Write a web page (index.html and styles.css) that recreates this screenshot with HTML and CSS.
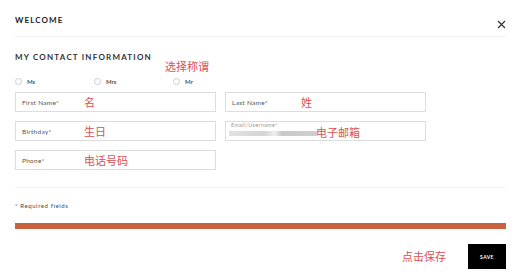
FILE: index.html
```html
<!DOCTYPE html>
<html lang="en">
<head>
    <meta charset="UTF-8">
    <meta name="viewport" content="width=device-width, initial-scale=1.0">
    <title>Welcome</title>
    <link rel="stylesheet" href="styles.css">
</head>
<body>
    <div class="modal">
        <div class="modal-header">
            <div class="modal-title">WELCOME</div>
            <button class="close-btn" aria-label="Close">
                <svg width="9" height="9" viewBox="0 0 9 9"><path d="M1 1L8 8M8 1L1 8" stroke="#333" stroke-width="1.2"/></svg>
            </button>
        </div>

        <div class="section-title">MY CONTACT INFORMATION</div>

        <div class="radio-row">
            <label class="radio"><span class="dot"></span>Ms</label>
            <label class="radio"><span class="dot"></span>Mrs</label>
            <label class="radio"><span class="dot"></span>Mr</label>
            <span class="note note-title">选择称谓</span>
        </div>

        <div class="fields">
            <div class="field">
                <span class="field-label">First Name*</span>
                <span class="note">名</span>
            </div>
            <div class="field">
                <span class="field-label wide">Last Name*</span>
                <span class="note">姓</span>
            </div>
            <div class="field">
                <span class="field-label">Birthday*</span>
                <span class="note">生日</span>
            </div>
            <div class="field field-email">
                <div class="email-col">
                    <span class="email-label">Email/Username*</span>
                    <span class="blur-value"></span>
                </div>
                <span class="note">电子邮箱</span>
            </div>
            <div class="field">
                <span class="field-label">Phone*</span>
                <span class="note">电话号码</span>
            </div>
        </div>

        <div class="divider"></div>

        <div class="required">* Required fields</div>

        <div class="progress-bar"></div>

        <div class="actions">
            <span class="note note-save">点击保存</span>
            <button class="save-btn">SAVE</button>
        </div>
    </div>
</body>
</html>
```

FILE: styles.css
```css
body {
    margin: 0;
    background: #fff;
    font-family: Lato, "Liberation Sans", sans-serif;
    color: #222;
}
.modal {
    width: 491px;
    padding: 0 21px 0 15px;
}
.modal-header {
    display: flex;
    justify-content: space-between;
    align-items: center;
    height: 37px;
    padding-top: 4px;
    box-sizing: border-box;
    border-bottom: 1px solid #f0f0f0;
}
.modal-title {
    font-size: 8px;
    font-weight: bold;
    letter-spacing: 1.1px;
    color: #222;
}
.close-btn {
    border: none;
    background: none;
    padding: 0;
    width: 9px;
    height: 9px;
    margin-top: 2px;
}
.section-title {
    margin-top: 15px;
    font-size: 8px;
    font-weight: bold;
    letter-spacing: 1.2px;
    color: #333;
}
.radio-row {
    position: relative;
    display: flex;
    align-items: center;
    margin-top: 13px;
    height: 12px;
}
.radio {
    display: flex;
    align-items: center;
    gap: 5px;
    width: 79px;
    font-size: 6px;
    font-weight: bold;
    color: #555;
}
.dot {
    width: 5px;
    height: 5px;
    border: 1px solid #ccc;
    border-radius: 50%;
}
.note {
    color: #db5055;
    font-family: "Noto Sans CJK SC", sans-serif;
    font-size: 11px;
    line-height: 1;
}
.note-title {
    position: absolute;
    left: 150px;
    top: -14px;
}
.fields {
    display: grid;
    grid-template-columns: 201px 201px;
    column-gap: 9px;
    row-gap: 9px;
    margin-top: 5px;
}
.field {
    display: flex;
    align-items: center;
    height: 20px;
    box-sizing: border-box;
    border: 1px solid #ddd;
    padding-left: 6px;
}
.field-label {
    width: 62px;
    font-size: 6.5px;
    color: #555;
    letter-spacing: 0.3px;
}
.field-label.wide {
    width: 69px;
}
.field-email {
    align-items: flex-end;
    padding-left: 3px;
    padding-bottom: 2px;
}
.email-col {
    display: flex;
    flex-direction: column;
    gap: 3px;
    width: 87px;
    align-self: stretch;
    padding-top: 0;
}
.email-label {
    font-size: 5.5px;
    color: #999;
    letter-spacing: 0.3px;
    padding-left: 2px;
}
.blur-value {
    height: 5px;
    width: 88px;
    background: linear-gradient(90deg, #e2e2e2 0%, #d4d4d4 40%, #eee 52%, #c8c8c8 60%, #d0d0d0 100%);
    filter: blur(0.6px);
}
.divider {
    margin-top: 17px;
    border-top: 1px solid #f5f5f5;
}
.required {
    margin-top: 14px;
    font-size: 6px;
    color: #444;
    letter-spacing: 0.6px;
}
.progress-bar {
    margin-top: 14px;
    height: 6px;
    background: #c9623f;
}
.actions {
    display: flex;
    justify-content: flex-end;
    align-items: center;
    gap: 22px;
    margin-top: 15px;
}
.note-save {
    font-size: 11px;
}
.save-btn {
    width: 38px;
    height: 25px;
    border: none;
    background: #000;
    color: #fff;
    font-family: Lato, "Liberation Sans", sans-serif;
    font-size: 5px;
    font-weight: bold;
    letter-spacing: 0.4px;
    padding: 0;
}
```
